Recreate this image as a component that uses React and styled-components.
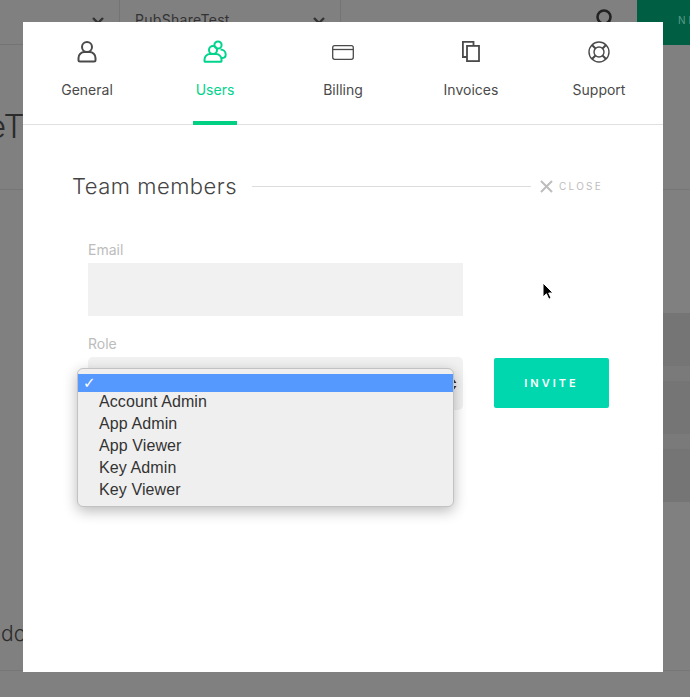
import React from 'react';
import styled, { createGlobalStyle } from 'styled-components';

const Global = createGlobalStyle`
  html, body { margin: 0; padding: 0; }
  body { font-family: "Open Sans", "Liberation Sans", sans-serif; background: #808080; }
  * { box-sizing: border-box; }
`;

const Page = styled.div`
  position: relative;
  width: 690px;
  height: 697px;
  overflow: hidden;
  background: #808080;
`;

const TopBar = styled.header`
  display: flex;
  height: 45px;
  border-bottom: 1px solid #747474;
`;

const TopCell = styled.div`
  width: ${p => p.$w}px;
  flex: none;
  display: flex;
  align-items: flex-start;
  justify-content: space-between;
  padding: 11px 14px 0 15px;
  border-right: 1px solid #747474;
  font-family: "Inter", sans-serif;
  font-size: 14px;
  letter-spacing: 0.3px;
  color: #333;
`;

const TopSpacer = styled.div`
  flex: 1;
  display: flex;
  justify-content: flex-end;
  padding: 8px 22px 0 0;
`;

const NewButton = styled.div`
  width: 53px;
  flex: none;
  height: 45px;
  background: #005f43;
  color: #5b9a86;
  font-family: "Inter", sans-serif;
  font-size: 10px;
  letter-spacing: 3px;
  padding: 14px 0 0 41px;
  white-space: nowrap;
  overflow: hidden;
`;

const BackTitle = styled.div`
  position: absolute;
  left: -13px;
  top: 106px;
  font-family: "Inter", sans-serif;
  font-size: 33px;
  font-weight: 300;
  color: #2b2b2b;
`;

const BackLine = styled.div`
  position: absolute;
  left: 0;
  right: 0;
  top: ${p => p.$y}px;
  height: 1px;
  background: #767676;
`;

const BackBand = styled.div`
  position: absolute;
  right: 0;
  width: 27px;
  top: ${p => p.$y}px;
  height: ${p => p.$h}px;
  background: ${p => p.$c};
`;

const BackWord = styled.div`
  position: absolute;
  left: 1px;
  top: 621px;
  font-family: "Inter", sans-serif;
  font-size: 21px;
  font-weight: 300;
  color: #2b2b2b;
`;

const Modal = styled.main`
  position: absolute;
  left: 23px;
  top: 22px;
  width: 640px;
  height: 650px;
  background: #fff;
`;

const Tabs = styled.nav`
  display: flex;
  height: 103px;
  border-bottom: 1px solid #e0e0e0;
`;

const Tab = styled.div`
  position: relative;
  width: 128px;
  display: flex;
  flex-direction: column;
  align-items: center;
  padding-top: 18px;
  font-family: "Inter", sans-serif;
  font-size: 14px;
  line-height: 20px;
  color: ${p => (p.$active ? '#00d48c' : '#4a4a4a')};
  svg { display: block; margin-bottom: 16px; }
  &::after {
    content: '';
    display: ${p => (p.$active ? 'block' : 'none')};
    position: absolute;
    left: 42px;
    bottom: -1px;
    width: 44px;
    height: 4px;
    background: #00d083;
  }
`;

const Body = styled.section`
  padding: 47px 54px 0 50px;
`;

const HeadRow = styled.div`
  display: flex;
  align-items: center;
  height: 28px;
  margin-left: -1px;
`;

const Title = styled.h2`
  margin: 0;
  font-family: "Inter", sans-serif;
  font-size: 22px;
  font-weight: 300;
  letter-spacing: 0.5px;
  color: #444;
  white-space: nowrap;
`;

const Rule = styled.div`
  width: 279px;
  height: 1px;
  background: #dcdcdc;
  margin: 0 9px 0 15px;
  flex: none;
`;

const Close = styled.div`
  display: flex;
  align-items: center;
  gap: 6px;
  font-family: "Inter", sans-serif;
  font-size: 10px;
  letter-spacing: 2.2px;
  color: #bdbdbd;
`;

const Form = styled.div`
  display: flex;
  flex-direction: column;
  padding: 39px 0 0 15px;
`;

const Label = styled.label`
  display: block;
  height: 24px;
  line-height: 22px;
  font-family: "Inter", sans-serif;
  font-size: 14px;
  color: #bcbcbc;
`;

const EmailField = styled.div`
  width: 375px;
  height: 53px;
  background: #f1f1f1;
  margin-bottom: 17px;
`;

const RoleRow = styled.div`
  display: flex;
  align-items: flex-start;
  gap: 31px;
`;

const RoleField = styled.div`
  position: relative;
  flex: none;
  width: 375px;
  height: 53px;
  background: #f1f1f1;
  border-radius: 5px;
`;

const Invite = styled.button`
  flex: none;
  width: 115px;
  height: 50px;
  margin-top: 1px;
  border: 0;
  border-radius: 2px;
  background: #00d7ae;
  color: #fff;
  font-family: "Inter", sans-serif;
  font-size: 11px;
  font-weight: 600;
  letter-spacing: 3px;
`;

const Dropdown = styled.ul`
  position: absolute;
  left: -11px;
  top: 11px;
  width: 377px;
  margin: 0;
  padding: 5px 0 5px;
  list-style: none;
  background: #efefef;
  border: 1px solid #c2c2c2;
  border-radius: 6px;
  box-shadow: 0 4px 14px rgba(0, 0, 0, 0.28);
  font-family: "Liberation Sans", sans-serif;
  font-size: 16px;
  letter-spacing: 0.1px;
  color: #333;
`;

const Option = styled.li`
  position: relative;
  height: 22px;
  line-height: 22px;
  padding-left: 21px;
  ${p => p.$selected && `
    height: 18px;
    margin-bottom: -1px;
    background: #5599ff;
    color: #fff;
    font-family: "DejaVu Sans", sans-serif;
    font-size: 15px;
    font-weight: 700;
    line-height: 18px;
    padding-left: 5px;
  `}
`;

const Stepper = styled.svg`
  position: absolute;
  right: 6px;
  top: 21px;
`;

const Cursor = styled.svg`
  position: absolute;
  left: 542px;
  top: 282px;
`;

const S = { fill: 'none', stroke: 'currentColor', strokeWidth: 2 };

const IconUser = () => (
  <svg width="22" height="24" viewBox="0 0 22 24" {...S}>
    <circle cx="11" cy="7" r="5" />
    <path d="M2.5 20v-2a6 6 0 0 1 6-6h5a6 6 0 0 1 6 6v2a1.5 1.5 0 0 1-1.5 1.5H4A1.5 1.5 0 0 1 2.5 20z" />
  </svg>
);

const IconUsers = () => (
  <svg width="24" height="24" viewBox="0 0 24 24" {...S}>
    <circle cx="15" cy="5" r="3.6" />
    <circle cx="10" cy="10" r="4" />
    <path d="M1.5 21v-1.5a5.5 5.5 0 0 1 5.5-5.5h6a5.5 5.5 0 0 1 5.5 5.5V21a.8.8 0 0 1-.8.8H2.3a.8.8 0 0 1-.8-.8z" />
    <path d="M17.5 9.5a5.3 5 0 0 1 5.2 5c0 2-1.4 3.6-4 3.6" />
  </svg>
);

const IconCard = () => (
  <svg width="24" height="24" viewBox="0 0 24 24" fill="none" stroke="currentColor" strokeWidth="1.3">
    <rect x="1.7" y="5.7" width="20.6" height="13.6" rx="2" />
    <path d="M2 9.5h20" />
  </svg>
);

const IconCopy = () => (
  <svg width="24" height="24" viewBox="0 0 24 24" fill="none" stroke="currentColor" strokeWidth="1.8">
    <path d="M8 17H3.9V1.9H14.5V5.5" />
    <rect x="8" y="5.9" width="12" height="15.2" />
  </svg>
);

const IconSupport = () => (
  <svg width="24" height="24" viewBox="0 0 24 24" fill="none" stroke="currentColor" strokeWidth="1.4">
    <circle cx="12" cy="12" r="10" />
    <circle cx="12" cy="12" r="5" />
    <path d="M5 5l3.5 3.5M19 5l-3.5 3.5M5 19l3.5-3.5M19 19l-3.5-3.5" strokeWidth="2" />
  </svg>
);

const Chevron = () => (
  <svg width="14" height="10" viewBox="0 0 14 10" fill="none" stroke="#333" strokeWidth="2.4" style={{ marginTop: 5 }}>
    <path d="M2 2l5 5 5-5" />
  </svg>
);

const tabs = [
  ['General', IconUser],
  ['Users', IconUsers],
  ['Billing', IconCard],
  ['Invoices', IconCopy],
  ['Support', IconSupport],
];

const roles = ['Account Admin', 'App Admin', 'App Viewer', 'Key Admin', 'Key Viewer'];

export default function App() {
  return (
    <Page>
      <Global />
      <TopBar>
        <TopCell $w={120}><span /><Chevron /></TopCell>
        <TopCell $w={221}><span>PubShareTest</span><Chevron /></TopCell>
        <TopSpacer>
          <svg width="20" height="20" viewBox="0 0 20 20" fill="none" stroke="#222" strokeWidth="2.6">
            <circle cx="9" cy="9" r="6.5" />
            <path d="M14 14l5 5" />
          </svg>
        </TopSpacer>
        <NewButton>NEW</NewButton>
      </TopBar>
      <BackTitle>eTest</BackTitle>
      <BackLine $y={189} />
      <BackLine $y={670} />
      <BackBand $y={366} $h={83} $c="#7a7a7a" />
      <BackBand $y={313} $h={53} $c="#757575" />
      <BackBand $y={381} $h={53} $c="#757575" />
      <BackBand $y={449} $h={53} $c="#757575" />
      <BackWord>do</BackWord>
      <Modal>
        <Tabs>
          {tabs.map(([label, Icon]) => (
            <Tab key={label} $active={label === 'Users'}>
              <Icon />
              {label}
            </Tab>
          ))}
        </Tabs>
        <Body>
          <HeadRow>
            <Title>Team members</Title>
            <Rule />
            <Close>
              <svg width="13" height="13" viewBox="0 0 13 13" stroke="#bdbdbd" strokeWidth="2">
                <path d="M1 1l11 11M12 1L1 12" />
              </svg>
              CLOSE
            </Close>
          </HeadRow>
          <Form>
            <Label>Email</Label>
            <EmailField />
            <Label>Role</Label>
            <RoleRow>
              <RoleField>
                <Stepper width="8" height="13" viewBox="0 0 8 13" fill="#333">
                  <path d="M4 0l3.5 5H.5zM4 13l3.5-5H.5z" />
                </Stepper>
                <Dropdown>
                  <Option $selected>✓</Option>
                  {roles.map(r => <Option key={r}>{r}</Option>)}
                </Dropdown>
              </RoleField>
              <Invite>INVITE</Invite>
            </RoleRow>
          </Form>
        </Body>
      </Modal>
      <Cursor width="12" height="19" viewBox="0 0 12 19">
        <path d="M1 1v14l3.4-3.2 2.4 5.4 2.3-1-2.4-5.2H11z" fill="#000" stroke="#fff" strokeWidth="1" />
      </Cursor>
    </Page>
  );
}
